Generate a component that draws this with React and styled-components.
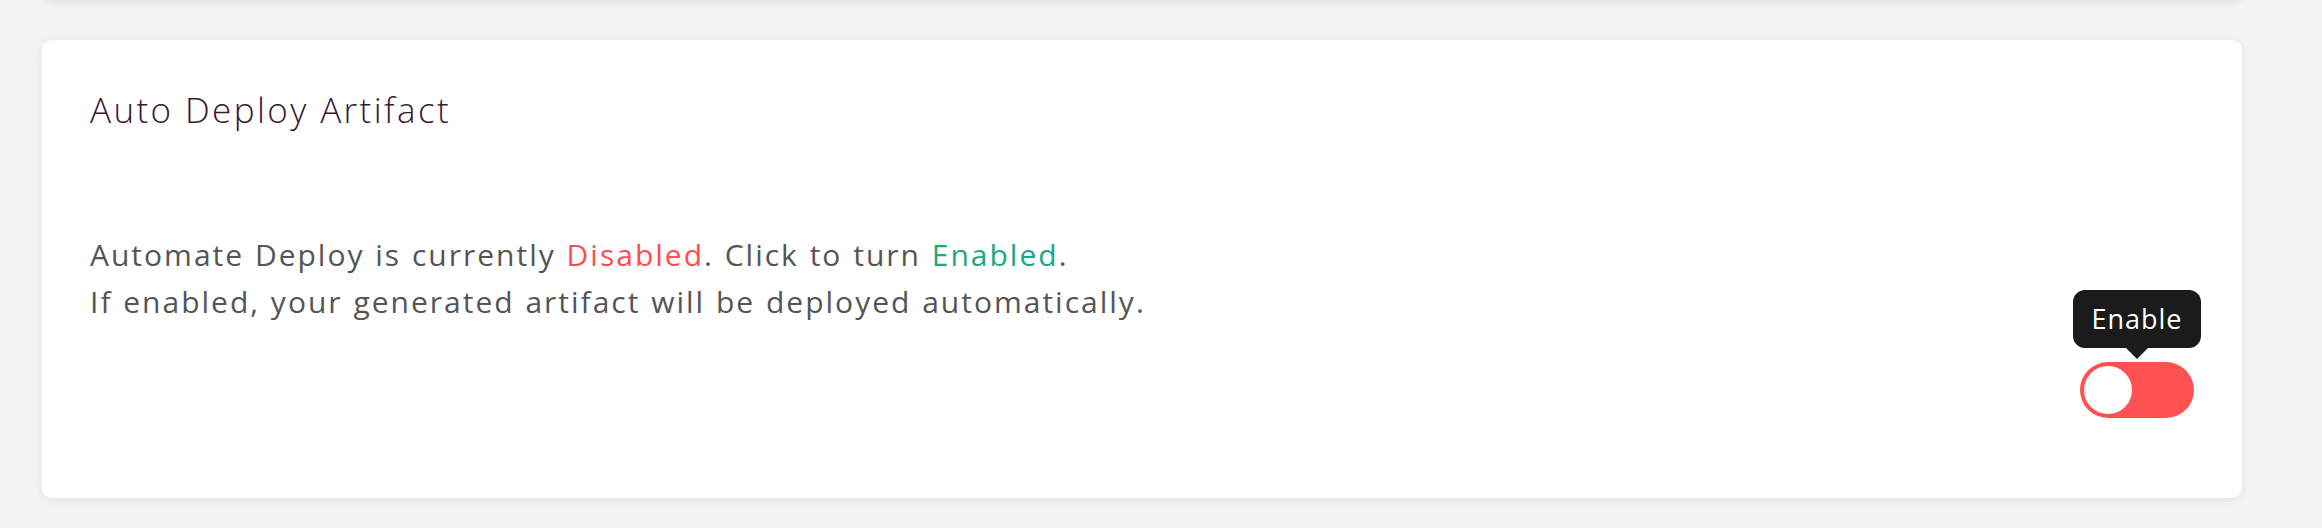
import React, { useState } from 'react';
import styled, { createGlobalStyle } from 'styled-components';

const GlobalStyle = createGlobalStyle`
	html, body {
		margin: 0;
		padding: 0;
		background: #f3f3f3;
	}
	body {
		font-family: 'Open Sans', 'Noto Sans', sans-serif;
	}
`;

export default function App() {
	const [enabled, setEnabled] = useState(false);
	return (
		<>
			<GlobalStyle />
			<Page>
				<PrevCard />
				<Card>
					<Title>Auto Deploy Artifact</Title>
					<Body>
						<Text>
							<p>
								Automate Deploy is currently{' '}
								<Status on={enabled}>{enabled ? 'Enabled' : 'Disabled'}</Status>. Click
								to turn <Status on={!enabled}>{enabled ? 'Disabled' : 'Enabled'}</Status>.
							</p>
							<p>If enabled, your generated artifact will be deployed automatically.</p>
						</Text>
						<ToggleWrap>
							<Tooltip>{enabled ? 'Disable' : 'Enable'}</Tooltip>
							<Switch on={enabled} onClick={() => setEnabled(!enabled)}>
								<Knob />
							</Switch>
						</ToggleWrap>
					</Body>
				</Card>
			</Page>
		</>
	);
}

const Page = styled.div`
	display: flex;
	flex-direction: column;
	gap: 40px;
	padding: 0 80px 30px 42px;
`;

const PrevCard = styled.div`
	height: 100px;
	margin-top: -100px;
	background: #fff;
	border-radius: 8px;
	box-shadow: 0 2px 10px rgba(0, 0, 0, 0.09);
`;

const Card = styled.div`
	background: #fff;
	border-radius: 10px;
	box-shadow: 0 2px 10px rgba(0, 0, 0, 0.08);
	padding: 48px 48px 0 48px;
	height: 458px;
	box-sizing: border-box;
`;

const Title = styled.h2`
	margin: 0;
	font-weight: 300;
	font-size: 35px;
	line-height: 44px;
	color: #3a1730;
	letter-spacing: 2.4px;
`;

const Body = styled.div`
	display: flex;
	justify-content: space-between;
	align-items: flex-start;
	margin-top: 99px;
`;

const Text = styled.div`
	font-size: 30px;
	line-height: 47px;
	letter-spacing: 2px;
	word-spacing: 1px;
	color: #555;
	p {
		margin: 0;
	}
`;

const Status = styled.span`
	color: ${({ on }) => (on ? '#1aa981' : '#ff4d4f')};
`;

const ToggleWrap = styled.div`
	display: flex;
	flex-direction: column;
	align-items: center;
	margin-top: 59px;
	margin-right: -7px;
`;

const Tooltip = styled.div`
	position: relative;
	width: 128px;
	text-align: center;
	background: #1b1b1b;
	color: #fff;
	font-size: 27px;
	letter-spacing: 1px;
	line-height: 58px;
	border-radius: 12px;
	margin-bottom: 14px;
	&::after {
		content: '';
		position: absolute;
		left: 50%;
		bottom: -11px;
		margin-left: -11px;
		border-left: 11px solid transparent;
		border-right: 11px solid transparent;
		border-top: 11px solid #1b1b1b;
	}
`;

const Switch = styled.button`
	width: 114px;
	height: 56px;
	border: none;
	border-radius: 28px;
	padding: 4px;
	background: ${({ on }) => (on ? '#1aa981' : '#ff5052')};
	display: flex;
	justify-content: ${({ on }) => (on ? 'flex-end' : 'flex-start')};
	cursor: pointer;
`;

const Knob = styled.span`
	width: 48px;
	height: 48px;
	border-radius: 50%;
	background: #fff;
`;
